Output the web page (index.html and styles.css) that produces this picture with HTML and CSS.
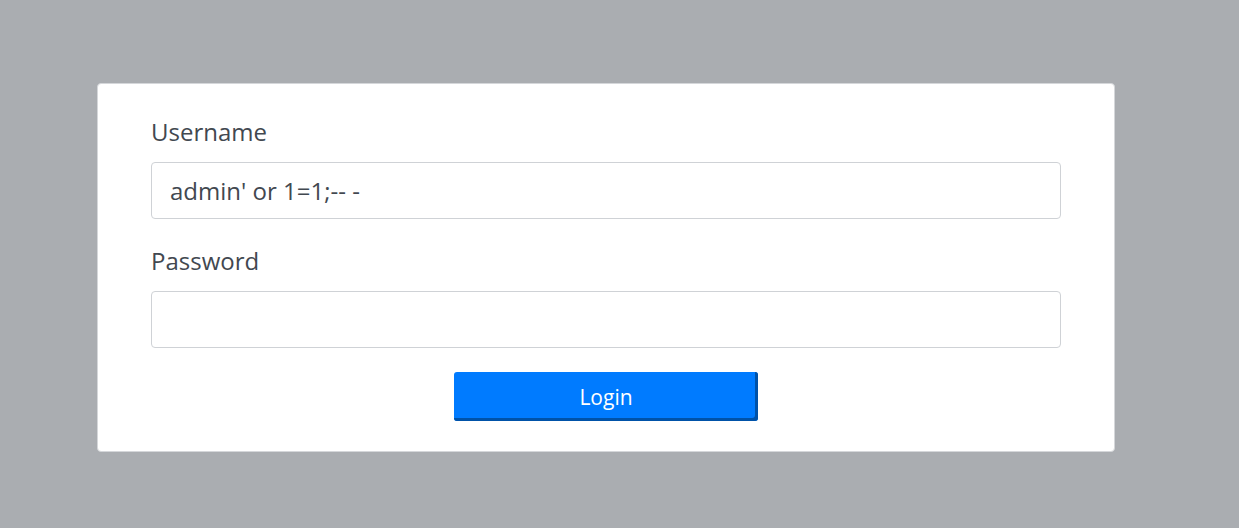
FILE: index.html
```html
<!DOCTYPE html>
<html>
<head>
<meta charset="utf-8">
<link rel="stylesheet" href="styles.css">
</head>
<body>
<div class="card">
  <form class="form">
    <label class="label">Username</label>
    <input class="input" type="text" value="admin' or 1=1;-- -">
    <label class="label label-pw">Password</label>
    <input class="input" type="password" value="">
    <div class="actions">
      <button class="btn" type="button">Login</button>
    </div>
  </form>
</div>
</body>
</html>
```

FILE: styles.css
```css
html, body {
  margin: 0;
  padding: 0;
}
body {
  background: #aaadb1;
  font-family: "Open Sans", "Noto Sans", sans-serif;
  width: 1239px;
  height: 528px;
  overflow: hidden;
}
.card {
  margin: 83px 0 0 97px;
  width: 1018px;
  height: 369px;
  box-sizing: border-box;
  background: #fff;
  border: 1px solid #d5d7da;
  border-radius: 4px;
  padding: 32px 53px 0 53px;
}
.form {
  display: flex;
  flex-direction: column;
}
.label {
  font-size: 24px;
  line-height: 32px;
  height: 32px;
  color: #424850;
  margin-bottom: 14px;
}
.label-pw {
  margin-top: 26px;
}
.input {
  box-sizing: border-box;
  width: 910px;
  height: 57px;
  border: 1px solid #cfd2d6;
  border-radius: 4px;
  padding: 0 18px;
  font-family: "Open Sans", "Noto Sans", sans-serif;
  font-size: 24px;
  color: #424850;
  outline: none;
}
.actions {
  display: flex;
  justify-content: center;
  margin-top: 24px;
}
.btn {
  width: 304px;
  height: 49px;
  box-sizing: border-box;
  border: none;
  border-radius: 3px;
  background: #007bff;
  color: #fff;
  font-family: "Open Sans", "Noto Sans", sans-serif;
  font-size: 21px;
  box-shadow: inset -3px -3px 0 #0052a8;
  padding: 0;
  cursor: pointer;
}
```
